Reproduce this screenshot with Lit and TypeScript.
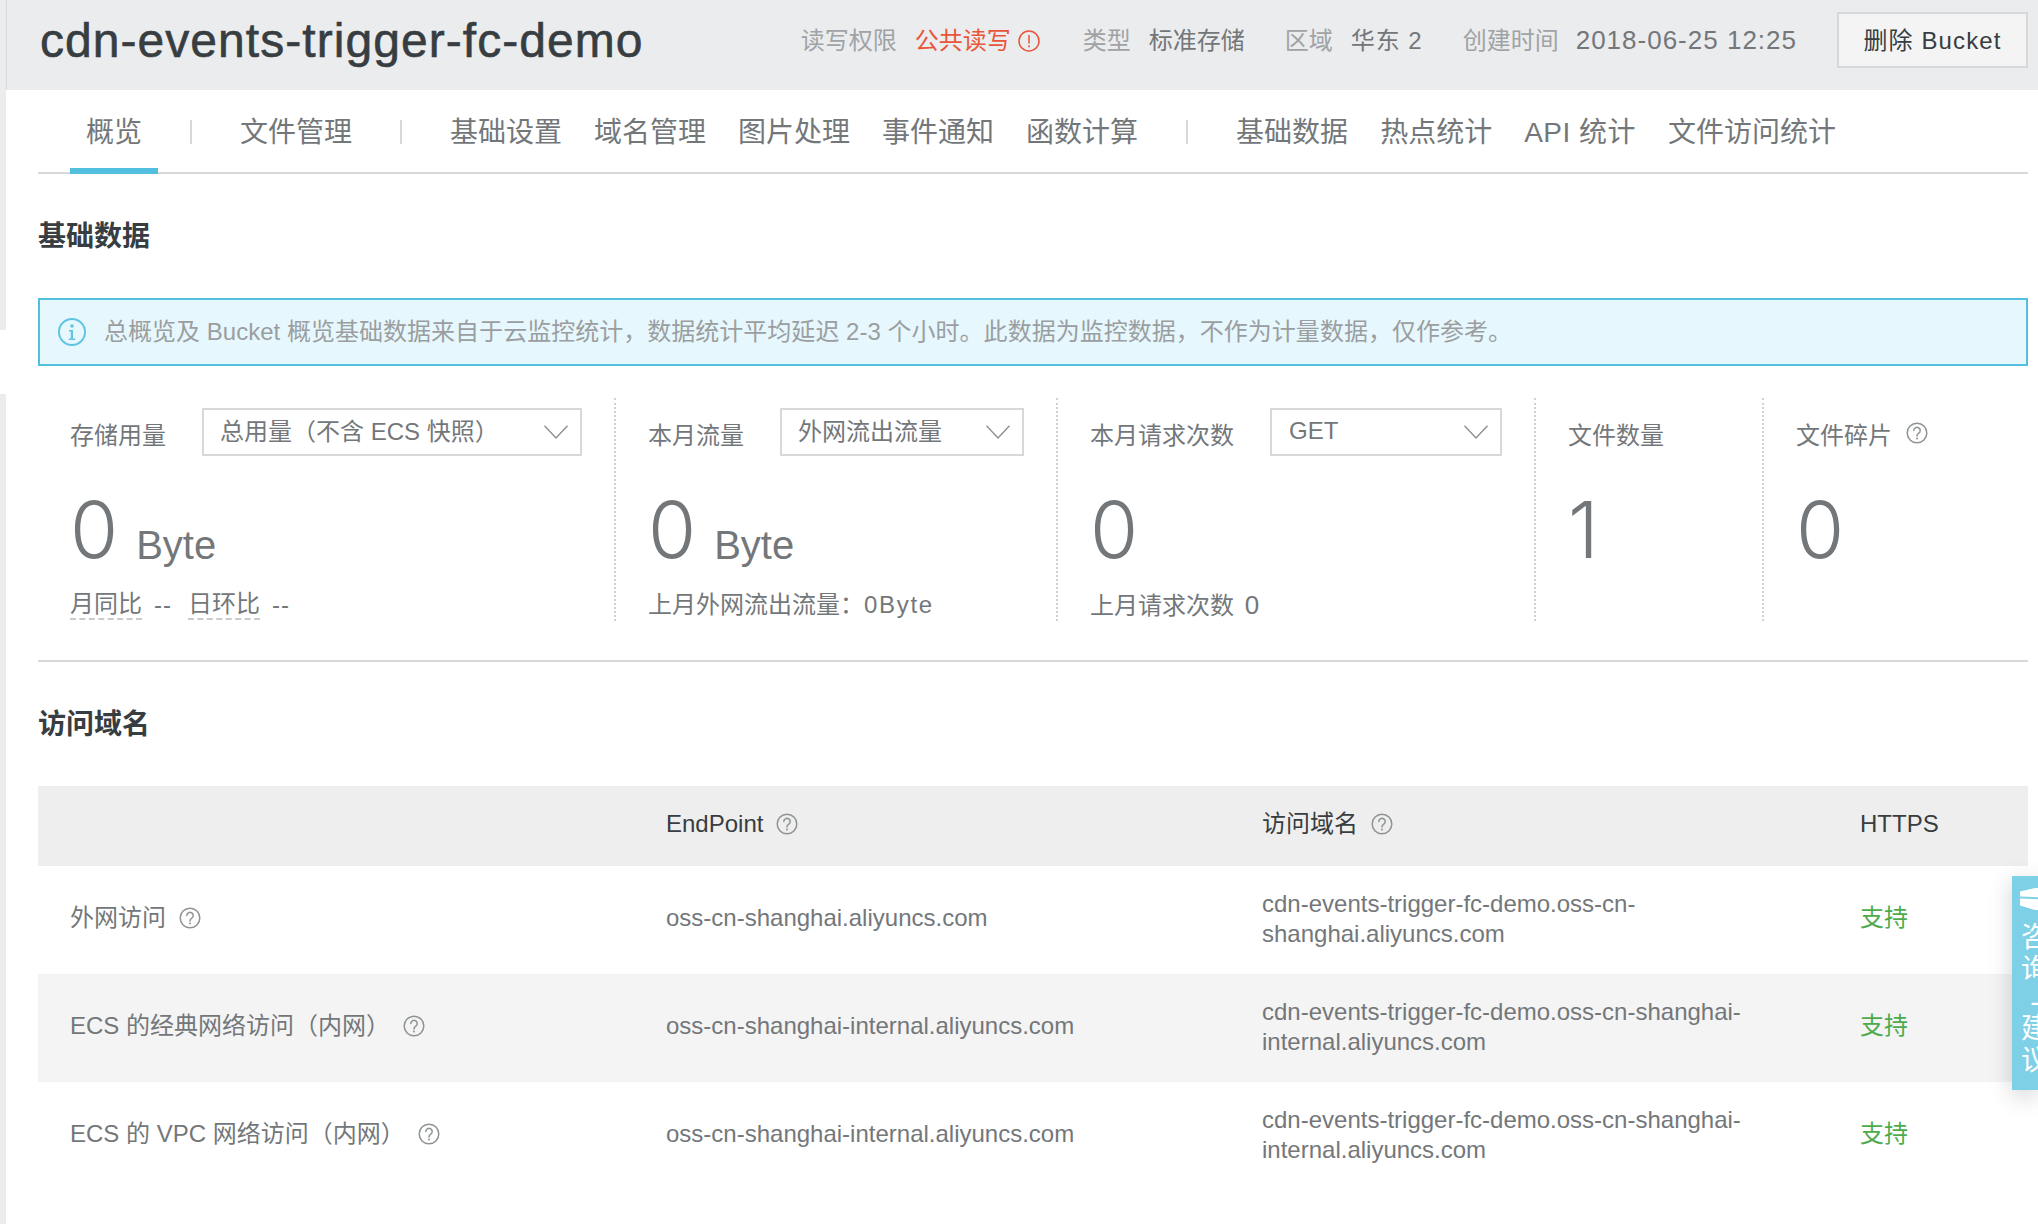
import { LitElement, html, css, svg } from "lit";
import { customElement } from "lit/decorators.js";

const helpIcon = html`<svg class="help" viewBox="0 0 22 22" width="22" height="22" fill="none" stroke="#8f9395" stroke-width="1.5">
  <circle cx="11" cy="11" r="9.8"></circle>
  ${svg`<path d="M7.8 8.6a3.2 3.2 0 1 1 5 2.6c-1.2.8-1.8 1.5-1.8 2.9" stroke-linecap="round"></path>
  <circle cx="11" cy="16.6" r="1" fill="#8f9395" stroke="none"></circle>`}
</svg>`;

const chevron = html`<svg class="chev" viewBox="0 0 24 14" width="24" height="14" fill="none" stroke="#8d9193" stroke-width="1.4">
  <polyline points="0.5,0.8 12,13 23.5,0.8"></polyline>
</svg>`;

const tabGroups = [
  ["概览"],
  ["文件管理"],
  ["基础设置", "域名管理", "图片处理", "事件通知", "函数计算"],
  ["基础数据", "热点统计", "API 统计", "文件访问统计"],
];

const rows = [
  {
    name: "外网访问",
    endpoint: "oss-cn-shanghai.aliyuncs.com",
    domain: "cdn-events-trigger-fc-demo.oss-cn-shanghai.aliyuncs.com",
  },
  {
    name: "ECS 的经典网络访问（内网）",
    endpoint: "oss-cn-shanghai-internal.aliyuncs.com",
    domain: "cdn-events-trigger-fc-demo.oss-cn-shanghai-internal.aliyuncs.com",
  },
  {
    name: "ECS 的 VPC 网络访问（内网）",
    endpoint: "oss-cn-shanghai-internal.aliyuncs.com",
    domain: "cdn-events-trigger-fc-demo.oss-cn-shanghai-internal.aliyuncs.com",
  },
];

@customElement("app-root")
export class AppRoot extends LitElement {
  static styles = css`
    :host {
      display: block;
      position: relative;
      height: 1224px;
      overflow: hidden;
      background: #fff;
      font-family: "Liberation Sans", "Noto Sans CJK SC", sans-serif;
      font-size: 24px;
      color: #73777a;
    }
    .page {
      display: grid;
      grid-template-columns: 6px 1fr;
      height: 1224px;
    }
    .rail {
      display: flex;
      flex-direction: column;
      gap: 64px;
    }
    .rail div {
      background: #ebeced;
    }
    .rail .top {
      height: 330px;
    }
    .rail .bottom {
      flex: 1;
    }
    .main {
      min-width: 0;
    }

    .head {
      height: 90px;
      box-sizing: border-box;
      background: #ebeced;
      border-left: 1px solid #d7d8d9;
      padding: 0 10px 0 32px;
      display: flex;
      align-items: center;
    }
    .title {
      font-size: 48px;
      letter-spacing: 1.05px;
      color: #373d41;
      -webkit-text-stroke: 0.6px #373d41;
      flex: 1;
      margin-left: 1px;
      margin-top: -10px;
    }
    .meta {
      display: flex;
      align-items: center;
      margin-top: -8px;
      white-space: nowrap;
      line-height: 30px;
    }
    .meta .k {
      color: #9fa3a6;
      margin-right: 18px;
    }
    .meta .k.tight {
      margin-right: 17px;
    }
    .meta .v {
      color: #73777a;
      margin-right: 40px;
    }
    .meta .red {
      color: #e8553a;
      margin-right: 7px;
    }
    .meta .alert-ic {
      margin-right: 43px;
    }
    .meta .num {
      letter-spacing: 1px;
      margin-right: 40px;
    }
    .meta .date {
      font-size: 26px;
      letter-spacing: 1px;
      margin-right: 40px;
      margin-top: -2px;
    }
    .del {
      width: 191px;
      height: 56px;
      box-sizing: border-box;
      border: 2px solid #d7d8d9;
      background: #f4f4f4;
      color: #373d41;
      display: flex;
      align-items: center;
      justify-content: center;
      letter-spacing: 1.1px;
      margin-top: -10px;
      padding-bottom: 4px;
    }

    .content {
      padding: 0 10px 0 32px;
    }
    .tabs {
      height: 84px;
      box-sizing: border-box;
      border-bottom: 2px solid #d7d8d9;
      padding-left: 32px;
      display: flex;
      font-size: 28px;
    }
    .tab {
      height: 84px;
      box-sizing: border-box;
      padding: 0 16px 2px;
      line-height: 85px;
    }
    .tab.on {
      border-bottom: 6px solid #52bfde;
      padding-bottom: 0;
    }
    .tab.api {
      letter-spacing: 0.5px;
    }
    .sep {
      width: 2px;
      height: 24px;
      background: #d7d8d9;
      margin: 30px 32px 0;
    }

    h2 {
      margin: 0;
      font-size: 28px;
      line-height: 40px;
      font-weight: 700;
      color: #373d41;
    }
    .h-basic {
      margin-top: 43px;
    }
    .notice {
      margin-top: 41px;
      height: 68px;
      box-sizing: border-box;
      border: 2px solid #52bfde;
      background: #e6f7fd;
      color: #9b9ea0;
      display: flex;
      align-items: center;
      gap: 18px;
      padding-left: 18px;
    }
    .notice span {
      margin-top: -5px;
      letter-spacing: 0.02px;
    }

    .stats {
      margin-top: 32px;
      height: 222px;
      display: grid;
      grid-template-columns: 576px 442px 478px 228px 266px;
    }
    .stat {
      box-sizing: border-box;
      padding: 10px 0 0 32px;
      border-left: 2px dotted #d0d2d3;
      white-space: nowrap;
    }
    .stat:first-child {
      border-left: 0;
    }
    .stat-top {
      display: flex;
      align-items: center;
      gap: 36px;
      height: 48px;
    }
    .label {
      display: flex;
      align-items: center;
      gap: 14px;
      padding-top: 2px;
    }
    .select {
      height: 48px;
      box-sizing: border-box;
      border: 2px solid #d7d8d9;
      padding: 0 18px 6px 16px;
      display: flex;
      align-items: center;
      justify-content: space-between;
    }
    .select .chev {
      margin-right: -6px;
      margin-top: 6px;
    }
    .select .get {
      margin: 3px 0 0 1px;
    }
    .s1 {
      width: 380px;
    }
    .s2 {
      width: 244px;
    }
    .s3 {
      width: 232px;
    }
    .value {
      margin-top: 34px;
      height: 80px;
      display: flex;
      align-items: baseline;
      gap: 18px;
      font-family: Inter, "Liberation Sans", sans-serif;
      font-size: 78px;
      font-weight: 300;
      line-height: 80px;
      color: #73777a;
    }
    .value .unit {
      font-family: "Liberation Sans", sans-serif;
      font-size: 40px;
      font-weight: 400;
      position: relative;
      top: 1px;
    }
    .sub {
      margin-top: 20px;
      line-height: 30px;
      display: flex;
      gap: 12px;
    }
    .dash {
      border-bottom: 2px dashed #c9cbcc;
      line-height: 28px;
      height: 28px;
    }
    .dd {
      letter-spacing: 1px;
    }
    .sub .gap {
      margin-right: 4px;
    }
    .wide {
      letter-spacing: 1.7px;
    }
    .n {
      font-size: 26px;
      margin-left: 4px;
    }

    .rule {
      height: 2px;
      background: #d7d8d9;
      margin-top: 40px;
    }
    .h-domain {
      margin-top: 43px;
    }
    .table {
      margin-top: 41px;
    }
    .tr {
      display: grid;
      grid-template-columns: 596px 596px 598px 200px;
      height: 108px;
      align-items: center;
    }
    .tr.th {
      height: 80px;
      background: #eeeeee;
      color: #373d41;
    }
    .tr.alt {
      background: #f4f4f4;
    }
    .td {
      padding: 0 32px 4px;
      line-height: 30px;
      display: flex;
      align-items: center;
      gap: 13px;
    }
    .tr:not(.th) .ep,
    .ok {
      padding-bottom: 5px;
    }
    .domain {
      display: block;
      padding: 0 56px 3px 32px;
    }
    .ok {
      color: #4dab4d;
    }

    .feedback {
      position: absolute;
      left: 2012px;
      top: 876px;
      width: 26px;
      height: 214px;
      background: #7dd0e6;
      box-shadow: 0 6px 24px rgba(0, 0, 0, 0.18);
    }
    .fb-in {
      width: 26px;
      height: 214px;
      overflow: hidden;
      padding-top: 12px;
      box-sizing: border-box;
      color: #fff;
      font-size: 28px;
      line-height: 32px;
    }
    .fb-in svg {
      display: block;
      margin: 0 0 12px 7px;
    }
    .fb-in span {
      display: block;
      width: 28px;
      margin-left: 9px;
      text-align: center;
    }
    .fb-in .fb-dash {
      margin: 2px 0 0 9px;
      height: 25px;
      line-height: 28px;
    }
  `;

  renderTabs() {
    const out: unknown[] = [];
    tabGroups.forEach((group, i) => {
      if (i > 0) out.push(html`<div class="sep"></div>`);
      group.forEach((t) => {
        const cls = t === "概览" ? "on" : t.startsWith("API") ? "api" : "";
        out.push(html`<div class="tab ${cls}">${t}</div>`);
      });
    });
    return out;
  }

  render() {
    return html`<div class="page">
        <div class="rail">
          <div class="top"></div>
          <div class="bottom"></div>
        </div>
        <div class="main">
          <div class="head">
            <div class="title">cdn-events-trigger-fc-demo</div>
            <div class="meta">
              <span class="k">读写权限</span>
              <span class="red">公共读写</span>
              <svg class="alert-ic" viewBox="0 0 22 22" width="22" height="22" fill="none" stroke="#e8553a" stroke-width="1.5">
                <circle cx="11" cy="11" r="10"></circle>
                <line x1="11" y1="5" x2="11" y2="13.5"></line>
                <line x1="11" y1="15.2" x2="11" y2="17.2"></line>
              </svg>
              <span class="k">类型</span>
              <span class="v">标准存储</span>
              <span class="k">区域</span>
              <span class="v num">华东 2</span>
              <span class="k tight">创建时间</span>
              <span class="v date">2018-06-25 12:25</span>
            </div>
            <div class="del">删除 Bucket</div>
          </div>
          <div class="content">
            <div class="tabs">${this.renderTabs()}</div>
            <h2 class="h-basic">基础数据</h2>
            <div class="notice">
              <svg viewBox="0 0 28 28" width="28" height="28" fill="none" stroke="#5fc5e2" stroke-width="2">
                <circle cx="14" cy="14" r="13"></circle>
                <circle cx="14" cy="8" r="1.8" fill="#5fc5e2" stroke="none"></circle>
                <path d="M11 12h4v8.4h2.2v1.6h-6.4v-1.6h2v-6.8h-1.8z" fill="#5fc5e2" stroke="none"></path>
              </svg>
              <span>总概览及 Bucket 概览基础数据来自于云监控统计，数据统计平均延迟 2-3 个小时。此数据为监控数据，不作为计量数据，仅作参考。</span>
            </div>

            <div class="stats">
              <div class="stat">
                <div class="stat-top">
                  <span class="label">存储用量</span>
                  <div class="select s1"><span>总用量（不含 ECS 快照）</span>${chevron}</div>
                </div>
                <div class="value">0<span class="unit">Byte</span></div>
                <div class="sub"><span class="dash">月同比</span><span class="gap dd">--</span><span class="dash">日环比</span><span class="dd">--</span></div>
              </div>
              <div class="stat">
                <div class="stat-top">
                  <span class="label">本月流量</span>
                  <div class="select s2"><span>外网流出流量</span>${chevron}</div>
                </div>
                <div class="value">0<span class="unit">Byte</span></div>
                <div class="sub"><span>上月外网流出流量：<span class="wide">0Byte</span></span></div>
              </div>
              <div class="stat">
                <div class="stat-top">
                  <span class="label">本月请求次数</span>
                  <div class="select s3"><span class="get">GET</span>${chevron}</div>
                </div>
                <div class="value">0</div>
                <div class="sub"><span>上月请求次数 <span class="n">0</span></span></div>
              </div>
              <div class="stat">
                <div class="stat-top"><span class="label">文件数量</span></div>
                <div class="value">1</div>
              </div>
              <div class="stat">
                <div class="stat-top"><span class="label">文件碎片 ${helpIcon}</span></div>
                <div class="value">0</div>
              </div>
            </div>

            <div class="rule"></div>
            <h2 class="h-domain">访问域名</h2>

            <div class="table">
              <div class="tr th">
                <div class="td"></div>
                <div class="td">EndPoint ${helpIcon}</div>
                <div class="td">访问域名 ${helpIcon}</div>
                <div class="td">HTTPS</div>
              </div>
              ${rows.map(
                (r, i) => html`<div class="tr ${i === 1 ? "alt" : ""}">
                  <div class="td">${r.name} ${helpIcon}</div>
                  <div class="td ep">${r.endpoint}</div>
                  <div class="td domain">${r.domain}</div>
                  <div class="td ok">支持</div>
                </div>`
              )}
            </div>
          </div>
        </div>
      </div>
      <div class="feedback">
        <div class="fb-in">
          <svg viewBox="0 0 40 22" width="40" height="22" fill="#fff">
            <path d="M1 3.5 16 0h24v10L1 8.5z"></path>
            <path d="M1 10.5 40 12v10H16L1 17.5z"></path>
          </svg>
          <span>咨</span>
          <span>询</span>
          <span class="fb-dash">-</span>
          <span>建</span>
          <span>议</span>
        </div>
      </div>`;
  }
}
